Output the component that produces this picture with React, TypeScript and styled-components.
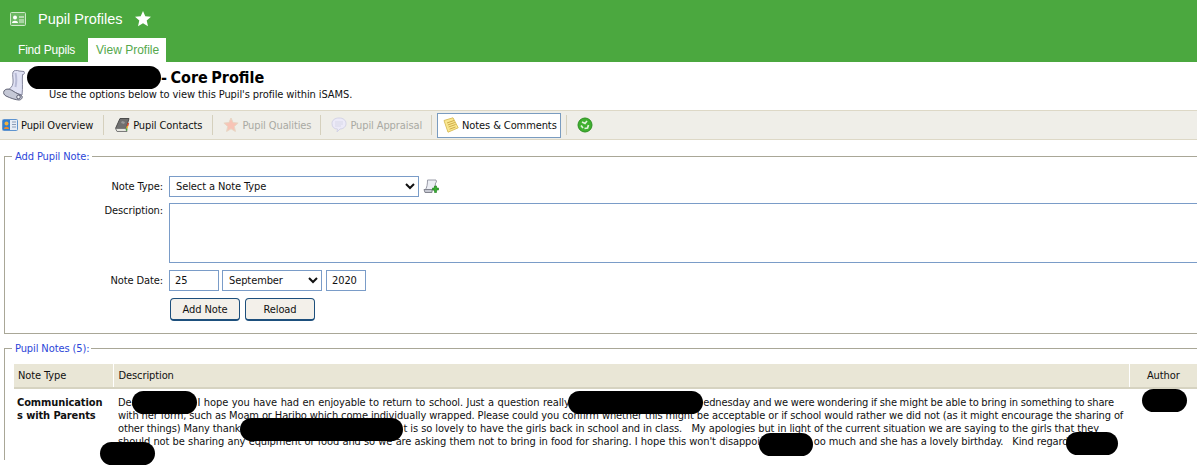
import React from 'react'
import styled, { createGlobalStyle } from 'styled-components'

const GlobalStyle = createGlobalStyle`
    html, body {
        margin: 0;
        padding: 0;
        background: #fff;
    }
    body {
        width: 1197px;
        height: 466px;
        overflow: hidden;
        font-family: "DejaVu Sans Condensed", "DejaVu Sans", sans-serif;
        font-stretch: condensed;
        font-size: 11px;
        letter-spacing: -0.1px;
        color: #111;
    }
`

const Page = styled.div`
    position: relative;
    width: 1197px;
    height: 466px;
    overflow: hidden;
`

const Header = styled.header`
    background: #4ba83f;
    height: 62px;
    color: #fff;
    font-family: "Liberation Sans", Arial, sans-serif;
    letter-spacing: 0;
`

const TopBar = styled.div`
    height: 38px;
    display: flex;
    align-items: center;
    padding-left: 10px;
    font-size: 14.5px;
    .title {
        margin-left: 12px;
        margin-right: 12px;
    }
`

const Tabs = styled.div`
    height: 24px;
    display: flex;
    padding-left: 6px;
    font-size: 12px;
`

const Tab = styled.div<{ $active?: boolean }>`
    padding: 0 6px 0 ${p => (p.$active ? '8px' : '12px')};
    margin-right: ${p => (p.$active ? '0' : '1px')};
    line-height: 24px;
    width: ${p => (p.$active ? '78px' : '81px')};
    box-sizing: border-box;
    letter-spacing: ${p => (p.$active ? '0' : '-0.2px')};
    background: ${p => (p.$active ? '#fff' : 'transparent')};
    color: ${p => (p.$active ? '#55a84c' : '#fff')};
`

const TitleBlock = styled.div`
    height: 48px;
    display: flex;
    padding-left: 3px;
`

const TitleText = styled.div`
    margin-left: 2px;
    h1 {
        margin: 5px 0 0;
        height: 21px;
        font-size: 16px;
        line-height: 21px;
        font-weight: bold;
        letter-spacing: 0;
        word-spacing: -1.5px;
        color: #000;
        display: flex;
        align-items: center;
        white-space: pre;
    }
    p {
        margin: 0 0 0 22px;
        line-height: 13px;
        color: #111;
    }
`

const TitleName = styled.span`
    display: inline-block;
    width: 134px;
    height: 23px;
    background: #000;
    border-radius: 12px;
`

const Toolbar = styled.nav`
    height: 28px;
    background: #efeee8;
    border-top: 1px solid #ddd8c6;
    border-bottom: 1px solid #ddd8c6;
    display: flex;
    align-items: center;
    padding-left: 2px;
`

const ToolItem = styled.div<{ $disabled?: boolean; $active?: boolean; $first?: boolean }>`
    display: flex;
    align-items: center;
    gap: 3px;
    height: 25px;
    box-sizing: border-box;
    padding: 0 ${p => (p.$active ? '3px' : p.$disabled ? '4px' : '5px')} 0 ${p => (p.$first ? '0' : '5px')};
    color: ${p => (p.$disabled ? '#a9a9a3' : '#111')};
    background: ${p => (p.$active ? '#fff' : 'transparent')};
    border: ${p => (p.$active ? '1px solid #7a9cc0' : '0')};
`

const ToolDivider = styled.span`
    width: 1px;
    height: 20px;
    background: #d5d0bd;
    margin: 0 5px;
`

const ToolEnd = styled.span`
    display: flex;
    margin-left: 5px;
`

const Group = styled.fieldset`
    margin: 0 -40px 0 4px;
    padding: 0;
    border: 0;
    border-top: 1px solid #a9a797;
    border-left: 1px solid #a9a797;
    min-width: 0;
    legend {
        margin-left: 7px;
        padding: 0 2px 0 3px;
        color: #2c46d8;
        line-height: 13px;
    }
`

const NoteGroup = styled(Group)`
    margin-top: 10px;
    height: 184px;
    box-sizing: border-box;
    border-bottom: 1px solid #a9a797;
    padding-top: 13px;
`

const NotesGroup = styled(Group)`
    margin-top: 8px;
    height: 118px;
    box-sizing: border-box;
`

const FormGrid = styled.div`
    display: grid;
    grid-template-columns: 158px 1fr;
    column-gap: 6px;
    row-gap: 6px;
    align-items: start;
    label {
        text-align: right;
        line-height: 21px;
    }
    label.top {
        line-height: 15px;
    }
`

const Controls = styled.div<{ $gap: number; $top?: number; $left?: number }>`
    display: flex;
    align-items: center;
    gap: ${p => p.$gap}px;
    margin-top: ${p => p.$top || 0}px;
    margin-left: ${p => p.$left || 0}px;
`

const fieldCss = `
    box-sizing: border-box;
    height: 21px;
    border: 1px solid #7a9cc8;
    background: #fff;
    font: inherit;
    letter-spacing: inherit;
    color: #111;
    border-radius: 0;
    outline: none;
`

const Select = styled.select<{ $width: number }>`
    ${fieldCss}
    width: ${p => p.$width}px;
    padding-left: 2px;
`

const Input = styled.input<{ $width: number; $left?: number }>`
    ${fieldCss}
    width: ${p => p.$width}px;
    margin-left: ${p => p.$left || 0}px;
    padding-left: 5px;
`

const TextArea = styled.textarea`
    ${fieldCss}
    display: block;
    width: 1100px;
    height: 60px;
    margin-bottom: 1px;
    resize: none;
`

const Button = styled.button`
    box-sizing: border-box;
    width: 70px;
    height: 23px;
    background: #f3f0ea;
    border: 1px solid #1d4f7c;
    border-bottom-width: 2px;
    border-radius: 4px;
    font: inherit;
    letter-spacing: inherit;
    color: #111;
    padding: 0;
`

const Table = styled.table`
    width: 1183px;
    margin: 9px 0 0 9px;
    table-layout: fixed;
    border-collapse: collapse;
    th {
        background: #e9e6d6;
        border-bottom: 2px solid #d6d3c1;
        border-right: 1px solid #fff;
        height: 23px;
        padding: 0 4px;
        text-align: left;
        font-weight: normal;
    }
    th.desc {
        padding-left: 5px;
    }
    th.author {
        text-align: center;
        border-right: 0;
    }
    td {
        vertical-align: top;
        padding: 7px 3px 0;
        line-height: 13px;
    }
    td.type {
        font-weight: bold;
    }
    td.desc {
        padding-left: 5px;
        letter-spacing: -0.115px;
    }
`

const Line = styled.div`
    white-space: pre;
`

const Spread = styled.span<{ $word: number }>`
    word-spacing: ${p => p.$word}px;
`

// the blacked out words leave a hole in the sentence, the blob itself sits on top
const Hole = styled.span<{ $w: number }>`
    display: inline-block;
    width: ${p => p.$w}px;
`

const Redaction = styled.span<{ $x: number; $y: number; $w: number }>`
    position: absolute;
    left: ${p => p.$x}px;
    top: ${p => p.$y}px;
    width: ${p => p.$w}px;
    height: 23px;
    background: #000;
    border-radius: 12px;
`

const CardIcon = () => (
    <svg width="16" height="14" viewBox="0 0 16 14">
        <rect x="0.5" y="0.5" width="15" height="13" rx="1" fill="#6db863" stroke="#cfe8ca" />
        <circle cx="5" cy="5.500" r="2" fill="#fff" />
        <path d="M2 11c0-3 6-3 6 0z" fill="#fff" />
        <path d="M9 4h5v2H9z" fill="#b7dcb1" />
        <path d="M9 8h5M9 10h5" stroke="#e4f2e1" />
    </svg>
)

const WhiteStar = () => (
    <svg width="16" height="16" viewBox="0 0 16 16">
        <path d="M8 0l2.300 5.300 5.700.5-4.300 3.800 1.300 5.600L8 12.300l-5 2.900 1.300-5.600L0 5.800l5.700-.5z" fill="#fff" />
    </svg>
)

const ScrollIcon = () => (
    <svg width="22" height="31" viewBox="0 0 22 31" style={{ marginTop: 8, flexShrink: 0 }}>
        <path d="M10 2C11 0 14 0 16 1l5 .5c1 1.500 0 3.500-1.500 3C19 10 20 18 19 25L4 20c3-1 5.500-3 6-7 .5-4-1-8 0-11z" fill="#e0e2f4" stroke="#85879e" />
        <path d="M12.500 3c1 4 1 9 0 14" fill="none" stroke="#b8bbd6" strokeWidth="2" />
        <path d="M1 21c2-3 6-2 9 0 3 2 7 4 9 5 1 2-1 4-3 4-3 0-9-2-13-4-2-1-3-3-2-5z" fill="#c5c8d6" stroke="#626476" />
        <circle cx="15.500" cy="27" r="1.800" fill="#eef0f6" stroke="#626476" />
    </svg>
)

const OverviewIcon = () => (
    <svg width="16" height="14" viewBox="0 0 16 14">
        <rect x="0.5" y="1.5" width="15" height="11" rx="1" fill="#e6edf6" stroke="#5f94cf" />
        <rect x="1" y="2" width="7" height="10" fill="#2f7fd0" />
        <circle cx="4.500" cy="5.500" r="2" fill="#f0b040" />
        <path d="M2 11c0-3 5-3 5 0z" fill="#e88a2c" />
        <path d="M10 4h4M10 6.500h4M10 9h4" stroke="#8b9cb5" />
    </svg>
)

const BookIcon = () => (
    <svg width="16" height="16" viewBox="0 0 16 16">
        <path d="M6 1.500h9l-3 10H1.500z" fill="#707070" stroke="#4c4c4c" />
        <path d="M1.500 11.500H12l1 3H3z" fill="#e6e6e0" stroke="#7b7b7b" />
        <path d="M8 4l3 1-1 2-3-1z" fill="#9a9a9a" />
        <path d="M14.500 6l-1 3" stroke="#e04a30" strokeWidth="1.500" />
        <path d="M13.500 9l-.7 2.500" stroke="#e3b32e" strokeWidth="1.500" />
        <path d="M12.800 11.500l-.4 2" stroke="#4ca83f" strokeWidth="1.500" />
    </svg>
)

const FadedStar = () => (
    <svg width="16" height="16" viewBox="0 0 16 16">
        <path d="M8 1l2.100 4.600 5 .5-3.800 3.300 1.100 5L8 11.800l-4.400 2.600 1.100-5L.9 6.100l5-.5z" fill="#f8c4b6" stroke="#e8d6c4" />
    </svg>
)

const BubbleIcon = () => (
    <svg width="16" height="16" viewBox="0 0 16 16">
        <path d="M8 1c4 0 7 2 7 5.500S12 12 9 12l-3 3 .5-3C3 12 1 10 1 6.500S4 1 8 1z" fill="#eceaf8" stroke="#d3d3e6" />
        <path d="M4 5h8M4 7h8M4 9h6" stroke="#d8d8e8" />
    </svg>
)

const NotesIcon = () => (
    <svg width="16" height="16" viewBox="0 0 16 16">
        <path d="M1 3.500L10 .8l5.200 10L5 15.200z" fill="#fae890" stroke="#dcc060" />
        <path d="M4 6l7-2.500M4.800 8l7-2.500M5.600 10l7-2.500M6.500 12.200l6-2.200" stroke="#cfab4a" />
    </svg>
)

const RecycleIcon = () => (
    <svg width="16" height="16" viewBox="0 0 16 16">
        <circle cx="8" cy="8" r="7" fill="#3fb02f" stroke="#2d9022" />
        <path d="M5 5l3 1.500L10 4M11.500 8l-1 3-3 .5M4 8.500l2 2.500" fill="none" stroke="#dff3da" strokeWidth="1.700" />
    </svg>
)

const AddTypeIcon = () => (
    <svg width="16" height="16" viewBox="0 0 16 16">
        <path d="M4.500 1H13l.5 2-1 1-.7 7H2c2-2 2.500-6 2.500-10z" fill="#eceef4" stroke="#9a9ca8" />
        <path d="M1 10.500h8v3H2z" fill="#c6c8d2" stroke="#82848f" />
        <path d="M9.500 9h2V7h2v2h2v2h-2v2.500h-2V11h-2z" fill="#38b030" stroke="#1d7a1c" strokeWidth="0.600" />
    </svg>
)

const App: React.FC = () => {
    return (
        <Page>
            <GlobalStyle />
            <Header>
                <TopBar>
                    <CardIcon />
                    <span className='title'>{"Pupil Profiles"}</span>
                    <WhiteStar />
                </TopBar>
                <Tabs>
                    <Tab>{"Find Pupils"}</Tab>
                    <Tab $active>{"View Profile"}</Tab>
                </Tabs>
            </Header>
            <TitleBlock>
                <ScrollIcon />
                <TitleText>
                    <h1><TitleName />{"- Core Profile"}</h1>
                    <p>{"Use the options below to view this Pupil's profile within iSAMS."}</p>
                </TitleText>
            </TitleBlock>
            <Toolbar>
                <ToolItem $first><OverviewIcon />{"Pupil Overview"}</ToolItem>
                <ToolDivider />
                <ToolItem><BookIcon />{"Pupil Contacts"}</ToolItem>
                <ToolDivider />
                <ToolItem $disabled><FadedStar />{"Pupil Qualities"}</ToolItem>
                <ToolDivider />
                <ToolItem $disabled><BubbleIcon />{"Pupil Appraisal"}</ToolItem>
                <ToolDivider />
                <ToolItem $active><NotesIcon />{"Notes & Comments"}</ToolItem>
                <ToolDivider />
                <ToolEnd><RecycleIcon /></ToolEnd>
            </Toolbar>
            <NoteGroup>
                <legend>{"Add Pupil Note:"}</legend>
                <FormGrid>
                    <label>{"Note Type:"}</label>
                    <Controls $gap={4}>
                        <Select $width={250} defaultValue="none">
                            <option value="none">{"Select a Note Type"}</option>
                        </Select>
                        <AddTypeIcon />
                    </Controls>
                    <label className='top'>{"Description:"}</label>
                    <TextArea />
                    <label>{"Note Date:"}</label>
                    <Controls $gap={3}>
                        <Input $width={50} defaultValue="25" />
                        <Select $width={100} defaultValue="9">
                            <option value="9">{"September"}</option>
                        </Select>
                        <Input $width={40} $left={1} defaultValue="2020" />
                    </Controls>
                    <span />
                    <Controls $gap={5} $top={1} $left={1}>
                        <Button>{"Add Note"}</Button>
                        <Button>{"Reload"}</Button>
                    </Controls>
                </FormGrid>
            </NoteGroup>
            <NotesGroup>
                <legend>{"Pupil Notes (5):"}</legend>
                <Table>
                    <colgroup>
                        <col style={{ width: 99 }} />
                        <col />
                        <col style={{ width: 68 }} />
                    </colgroup>
                    <thead>
                        <tr>
                            <th>{"Note Type"}</th>
                            <th className='desc'>{"Description"}</th>
                            <th className='author'>{"Author"}</th>
                        </tr>
                    </thead>
                    <tbody>
                        <tr>
                            <td className='type'>{"Communication"}<br />{"s with Parents"}</td>
                            <td className='desc'>
                                <Line>{"Dea"}<Hole $w={60} /><Spread $word={0.6}>{"I hope you have had en enjoyable to return to school. Just a question really."}</Spread><Hole $w={132} /><Spread $word={-0.3}>{"ednesday and we were wondering if she might be able to bring in something to share"}</Spread></Line>
                                <Line>{"with her form, such as Moam or Haribo which come individually wrapped. Please could you confirm whether this might be acceptable or if school would rather we did not (as it might encourage the sharing of"}</Line>
                                <Line>{"other things) Many thank"}<Hole $w={163} /><Spread $word={0.1}>{"t is so lovely to have the girls back in school and in class.   My apologies but in light of the current situation we are saying to the girls that they"}</Spread></Line>
                                <Line><Spread $word={0.3}>{"should not be sharing any equipment or food and so we are asking them not to bring in food for sharing. I hope this won't disappoi"}</Spread><Hole $w={54} />{"oo much and she has a lovely birthday.   Kind regard"}</Line>
                            </td>
                            <td />
                        </tr>
                    </tbody>
                </Table>
            </NotesGroup>
            <Redaction $x={132} $y={391} $w={65} />
            <Redaction $x={568} $y={391} $w={135} />
            <Redaction $x={240} $y={418} $w={163} />
            <Redaction $x={100} $y={442} $w={55} />
            <Redaction $x={759} $y={433} $w={54} />
            <Redaction $x={1066} $y={432} $w={52} />
            <Redaction $x={1142} $y={389} $w={45} />
        </Page>
    )
}

export default App
